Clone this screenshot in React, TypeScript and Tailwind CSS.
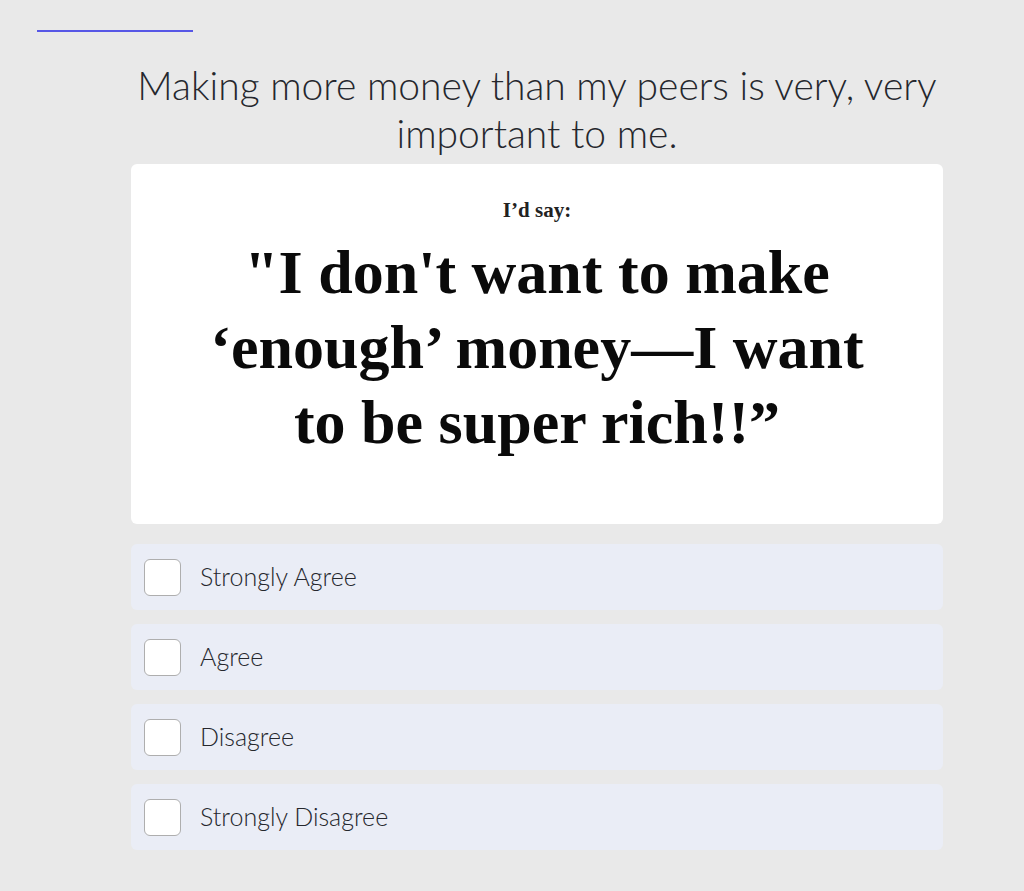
const options = ["Strongly Agree", "Agree", "Disagree", "Strongly Disagree"];

export default function App() {
  return (
    <div className="min-h-[891px] w-full bg-[#e9e9e9] font-['Lato',sans-serif]">
      <div className="px-[37px] pt-[30px]">
        <div className="h-[2px] w-[156px] bg-[#5757e6]" />
      </div>
      <div className="ml-[131px] w-[812px] pt-[29px]">
        <h1 className="text-center text-[39px] font-light leading-[48px] text-[#25272d]">
          Making more money than my peers is very, very important to me.
        </h1>
        <div className="mt-[7px] flex h-[360px] flex-col items-center rounded-md bg-white pt-[34px]">
          <p className="font-['Liberation_Serif',serif] text-[21px] leading-[24px] font-bold text-[#222]">I’d say:</p>
          <p className="mt-[13px] text-center font-['Liberation_Serif',serif] text-[62px] font-bold leading-[75px] text-[#0a0a0a]">
            "I don't want to make
            <br />
            ‘enough’ money—I want
            <br />
            to be super rich!!”
          </p>
        </div>
        <div className="mt-[20px] flex flex-col gap-[14px]">
          {options.map((o) => (
            <label key={o} className="flex h-[66px] cursor-pointer items-center gap-[19px] rounded-md bg-[#eaedf6] px-[13px]">
              <span className="h-[37px] w-[37px] rounded-[6px] border-[1.5px] border-[#aeaeae] bg-white" />
              <span className="text-[25px] font-light text-[#25272d]">{o}</span>
            </label>
          ))}
        </div>
      </div>
    </div>
  );
}
